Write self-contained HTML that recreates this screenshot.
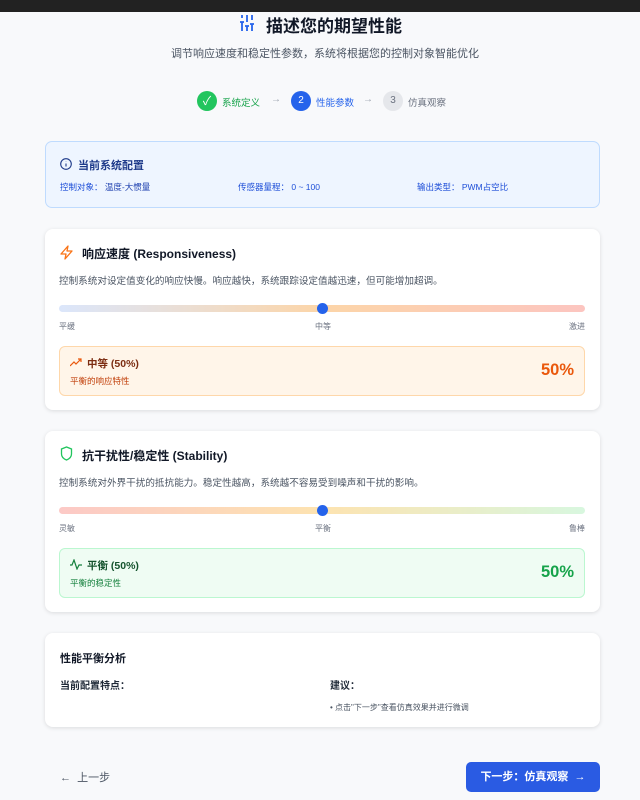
<!DOCTYPE html>
<html><head><meta charset="utf-8"><style>
*{margin:0;padding:0;box-sizing:border-box}
body{width:640px;height:800px;background:#f8f9fb;font-family:"Liberation Sans","Noto Sans CJK SC",sans-serif;position:relative;overflow:hidden;color:#111827}
.a{position:absolute;white-space:nowrap}
.card{position:absolute;left:45px;width:555px;background:#fff;border-radius:8px;box-shadow:0 1px 4px rgba(0,0,0,.12)}
.track{position:absolute;left:59px;width:526px;height:7px;border-radius:4px}
.thumb{position:absolute;width:11px;height:11px;border-radius:50%;background:#2563eb;left:317px}
.lbl{font-size:8px;color:#6b7280}
</style></head><body>
<div class="a" style="left:0;top:0;width:640px;height:12px;background:#222"></div>
<svg class="a" style="left:240px;top:14px" width="14" height="18" viewBox="0 0 14 18" stroke="#2563eb" stroke-width="1.8" fill="none"><path d="M2 1v3M2 8v9M7 1v7M7 12v5M12 1v5M12 10v7M0 8h4M5 12h4M10 10h4"/></svg>
<div class="a" style="left:266px;top:12px;font-size:17px;font-weight:bold">描述您的期望性能</div>
<div class="a" style="left:171px;top:45px;font-size:11px;color:#4b5563">调节响应速度和稳定性参数，系统将根据您的控制对象智能优化</div>
<div class="a" style="left:197px;top:91px;width:20px;height:20px;border-radius:50%;background:#22c55e;color:#fff;font-size:12px;text-align:center;line-height:20px">✓</div>
<div class="a" style="left:222px;top:95px;font-size:9.5px;color:#16a34a">系统定义</div>
<div class="a" style="left:271px;top:94px;font-size:10px;color:#9ca3af">→</div>
<div class="a" style="left:291px;top:91px;width:20px;height:20px;border-radius:50%;background:#2563eb;color:#fff;font-size:10px;text-align:center;line-height:20px">2</div>
<div class="a" style="left:316px;top:95px;font-size:9.5px;color:#2563eb">性能参数</div>
<div class="a" style="left:363px;top:94px;font-size:10px;color:#9ca3af">→</div>
<div class="a" style="left:383px;top:91px;width:20px;height:20px;border-radius:50%;background:#e5e7eb;color:#6b7280;font-size:10px;text-align:center;line-height:20px">3</div>
<div class="a" style="left:408px;top:95px;font-size:9.5px;color:#6b7280">仿真观察</div>

<div class="a" style="left:45px;top:141px;width:555px;height:67px;background:#eef5ff;border:1px solid #bfdbfe;border-radius:7px"></div>
<svg class="a" style="left:60px;top:158px" width="12" height="12" viewBox="0 0 12 12" fill="none" stroke="#1e3a8a" stroke-width="1.1"><circle cx="6" cy="6" r="5.3"/><path d="M6 5.5v3M6 3.5v.3"/></svg>
<div class="a" style="left:78px;top:157px;font-size:11px;font-weight:bold;color:#1e3a8a">当前系统配置</div>
<div class="a" style="left:60px;top:181px;font-size:8.5px;color:#1d4ed8">控制对象： <span style="color:#1e40af">温度-大惯量</span></div>
<div class="a" style="left:238px;top:181px;font-size:8.5px;color:#1d4ed8">传感器量程： 0 ~ 100</div>
<div class="a" style="left:417px;top:181px;font-size:8.5px;color:#1d4ed8">输出类型： PWM占空比</div>

<div class="card" style="top:229px;height:181px"></div>
<svg class="a" style="left:60px;top:245px" width="13" height="15" viewBox="0 0 13 15" fill="none" stroke="#f97316" stroke-width="1.3" stroke-linejoin="round"><path d="M8 1L1 9h5l-1 5 7-8H7z"/></svg>
<div class="a" style="left:82px;top:245px;font-size:12px;font-weight:bold">响应速度 (Responsiveness)</div>
<div class="a" style="left:59px;top:273px;font-size:9.6px;color:#4b5563">控制系统对设定值变化的响应快慢。响应越快，系统跟踪设定值越迅速，但可能增加超调。</div>
<div class="track" style="top:305px;background:linear-gradient(90deg,#dbe6fb,#fcd5a8 50%,#fcc5c0)"></div>
<div class="thumb" style="top:303px"></div>
<div class="a lbl" style="left:59px;top:321px">平缓</div>
<div class="a lbl" style="left:315px;top:321px">中等</div>
<div class="a lbl" style="left:569px;top:321px">激进</div>
<div class="a" style="left:59px;top:346px;width:526px;height:50px;background:#fff5e9;border:1px solid #fed7aa;border-radius:6px"></div>
<svg class="a" style="left:70px;top:358px" width="12" height="9" viewBox="0 0 12 9" fill="none" stroke="#ea580c" stroke-width="1.2"><path d="M0 8l4-4 2 2 5-5M8 1h3v3"/></svg>
<div class="a" style="left:87px;top:356px;font-size:10.5px;color:#7c2d12;font-weight:bold">中等 (50%)</div>
<div class="a" style="left:70px;top:375px;font-size:8.5px;color:#c2410c">平衡的响应特性</div>
<div class="a" style="left:541px;top:361px;font-size:16.5px;font-weight:bold;color:#ea580c">50%</div>

<div class="card" style="top:431px;height:181px"></div>
<svg class="a" style="left:60px;top:446px" width="13" height="15" viewBox="0 0 13 15" fill="none" stroke="#22c55e" stroke-width="1.3"><path d="M6.5 1L1.5 3v5c0 3 2.5 5 5 6 2.5-1 5-3 5-6V3z"/></svg>
<div class="a" style="left:82px;top:447px;font-size:12px;font-weight:bold">抗干扰性/稳定性 (Stability)</div>
<div class="a" style="left:59px;top:475px;font-size:9.6px;color:#4b5563">控制系统对外界干扰的抵抗能力。稳定性越高，系统越不容易受到噪声和干扰的影响。</div>
<div class="track" style="top:507px;background:linear-gradient(90deg,#fcc9c6,#fde3b0 50%,#d8f7df)"></div>
<div class="thumb" style="top:505px"></div>
<div class="a lbl" style="left:59px;top:523px">灵敏</div>
<div class="a lbl" style="left:315px;top:523px">平衡</div>
<div class="a lbl" style="left:569px;top:523px">鲁棒</div>
<div class="a" style="left:59px;top:548px;width:526px;height:50px;background:#effcf3;border:1px solid #bbf7d0;border-radius:6px"></div>
<svg class="a" style="left:70px;top:559px" width="12" height="11" viewBox="0 0 12 11" fill="none" stroke="#15803d" stroke-width="1.2"><path d="M0 6h2l2-5 3 9 2-4h3"/></svg>
<div class="a" style="left:87px;top:558px;font-size:10.5px;color:#14532d;font-weight:bold">平衡 (50%)</div>
<div class="a" style="left:70px;top:577px;font-size:8.5px;color:#15803d">平衡的稳定性</div>
<div class="a" style="left:541px;top:563px;font-size:16.5px;font-weight:bold;color:#16a34a">50%</div>

<div class="card" style="top:633px;height:94px"></div>
<div class="a" style="left:60px;top:650px;font-size:11px;font-weight:bold">性能平衡分析</div>
<div class="a" style="left:60px;top:677px;font-size:10px;font-weight:bold;color:#1f2937">当前配置特点：</div>
<div class="a" style="left:330px;top:677px;font-size:10px;font-weight:bold;color:#1f2937">建议：</div>
<div class="a" style="left:330px;top:702px;font-size:8px;color:#4b5563">• 点击"下一步"查看仿真效果并进行微调</div>

<div class="a" style="left:60px;top:769px;font-size:11px;color:#4b5563">←&nbsp; 上一步</div>
<div class="a" style="left:466px;top:762px;width:134px;height:30px;background:#2a5be3;border-radius:5px;color:#fff;font-size:11px;font-weight:bold;text-align:center;line-height:30px">下一步：仿真观察 &nbsp;→</div>
</body></html>
